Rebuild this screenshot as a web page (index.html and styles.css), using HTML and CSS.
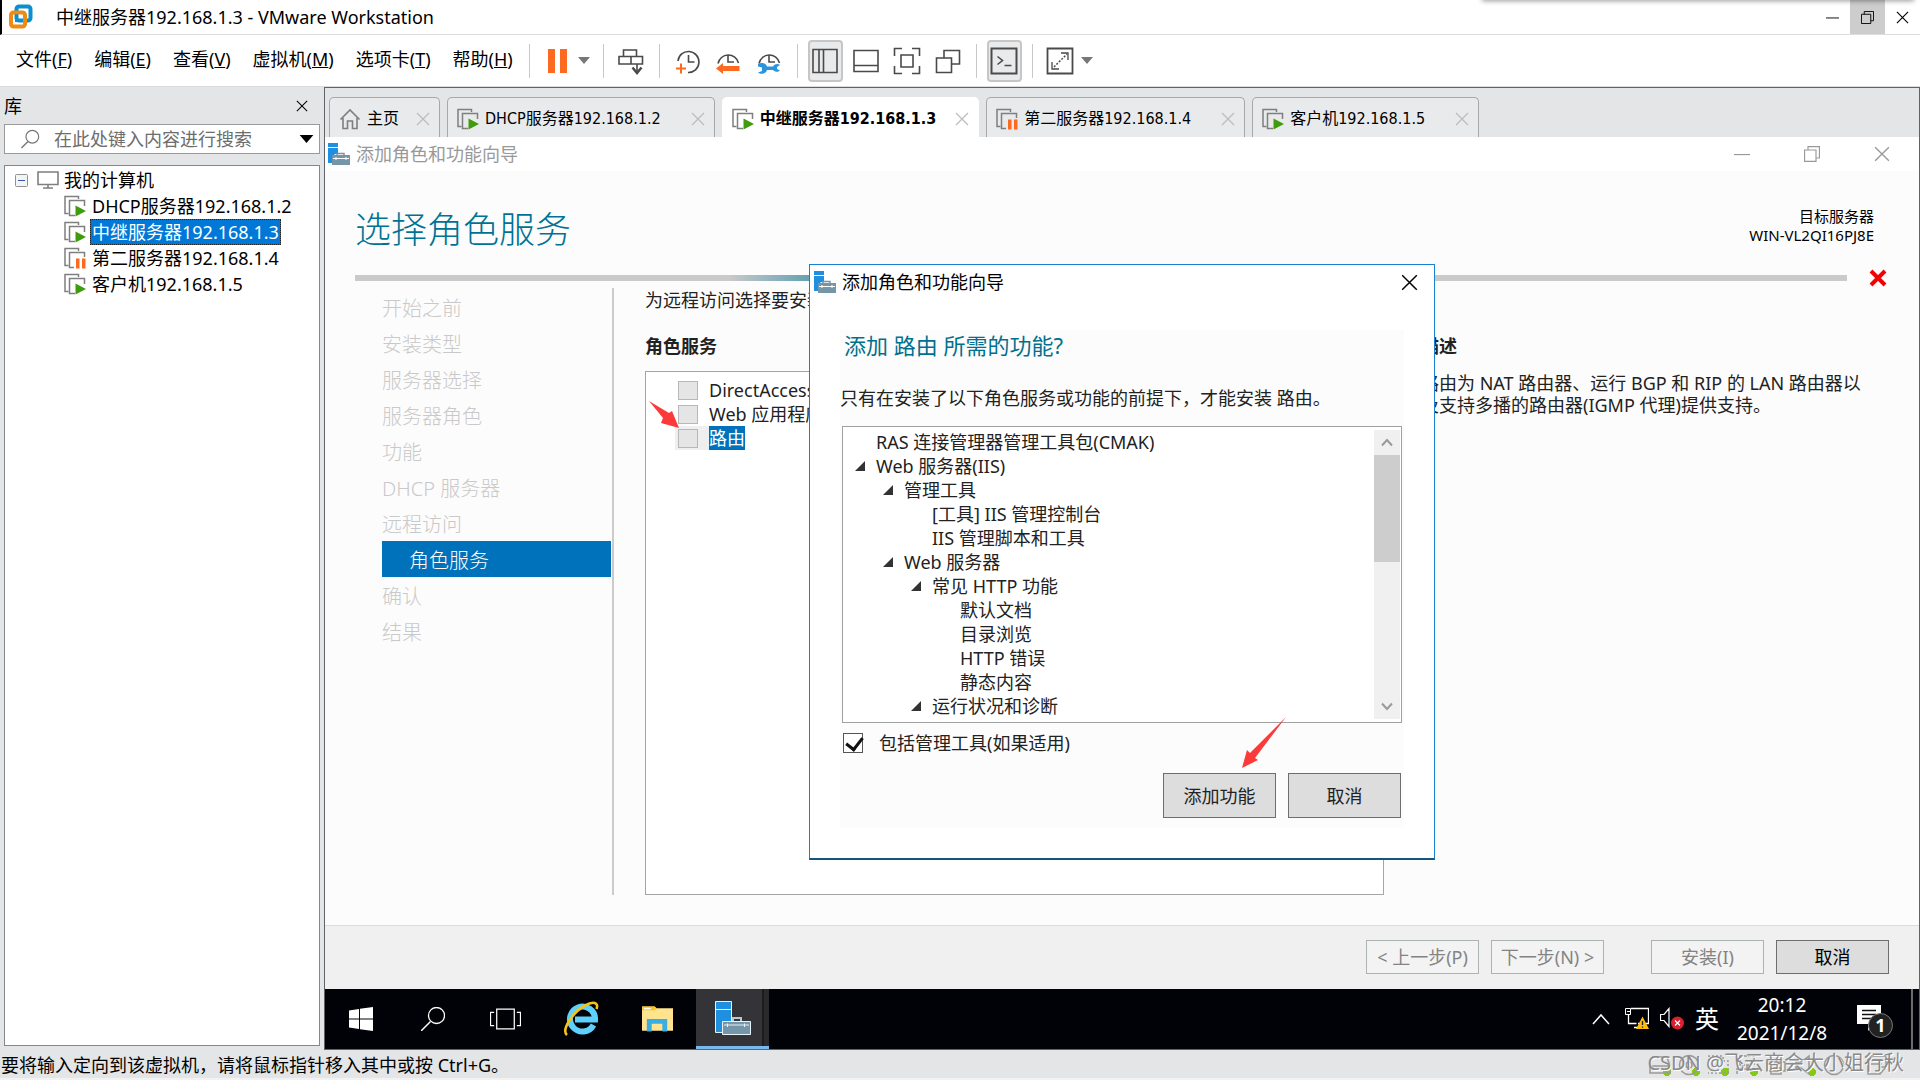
FILE: index.html
```html
<!DOCTYPE html>
<html lang="zh-CN">
<head>
    <meta charset="UTF-8">
    <meta name="viewport" content="width=device-width, initial-scale=1.0">
    <title>中继服务器192.168.1.3 - VMware Workstation</title>
    <link rel="stylesheet" href="styles.css">
</head>
<body>
    <!-- Shared icons -->
    <svg class="sprite">
        <symbol id="vm-on" viewBox="0 0 22 22">
            <path d="M4.500 18.500H1V1.500H14.500V4" fill="none" stroke="#7f7f7f" stroke-width="1.500"/>
            <path d="M11 20.500H5.500V5.500H20.500V11" fill="none" stroke="#7f7f7f" stroke-width="1.500"/>
            <path d="M11.500 10.500L22 16L11.500 21.500Z" fill="#3f9c0c"/>
        </symbol>
        <symbol id="vm-paused" viewBox="0 0 22 22">
            <path d="M4.500 18.500H1V1.500H14.500V4" fill="none" stroke="#7f7f7f" stroke-width="1.500"/>
            <path d="M10 20.500H5.500V5.500H20.500V10" fill="none" stroke="#7f7f7f" stroke-width="1.500"/>
            <path d="M12 11.500h3.500v10h-3.500zM18 11.500h3.500v10h-3.500z" fill="#fa6a20"/>
        </symbol>
        <symbol id="close" viewBox="0 0 14 14">
            <path d="M1 1L13 13M13 1L1 13" fill="none" stroke="currentColor" stroke-width="1.200"/>
        </symbol>
        <symbol id="minimize" viewBox="0 0 14 14">
            <path d="M0 7.500H14" stroke="currentColor"/>
        </symbol>
        <symbol id="restore" viewBox="0 0 14 14">
            <path d="M.500 3.500h10v10h-10zM3.500 3.500v-3h10v10h-3" fill="none" stroke="currentColor"/>
        </symbol>
        <symbol id="server" viewBox="0 0 22 22">
            <path d="M0 0h10v4H0zM0 5h10v6H7l-3 3v6H0z" fill="#1f8fe0"/>
            <path d="M9 12v-1.500h7V12" fill="none" stroke="#7595a8" stroke-width="1.500"/>
            <path d="M4 12h18v10H4z" fill="#7595a8"/>
            <path d="M5 15.500h16M8 14v3M18 14v3" stroke="#fff"/>
        </symbol>
        <symbol id="caret" viewBox="0 0 12 7">
            <path d="M0 0h12L6 7z" fill="currentColor"/>
        </symbol>
        <symbol id="clock" viewBox="0 0 28 28">
            <path d="M4 16.500A10.500 10.500 0 0 1 24.500 16" fill="none" stroke="#4a4a4a" stroke-width="1.600"/>
            <path d="M14 8v7h6" fill="none" stroke="#4a4a4a" stroke-width="1.600"/>
        </symbol>
    </svg>

    <header class="titlebar">
        <svg class="app-logo" viewBox="0 0 26 26">
            <rect x="8.500" y="2.500" width="14" height="14" rx="2.500" fill="none" stroke="#0a8fd0" stroke-width="4"/>
            <rect x="3" y="8.500" width="14" height="14" rx="2.500" fill="none" stroke="#f08a10" stroke-width="4"/>
            <path d="M8.500 10.500v6h5" fill="none" stroke="#0a8fd0" stroke-width="3"/>
        </svg>
        <h1>中继服务器192.168.1.3 - VMware Workstation</h1>
        <div class="window-controls">
            <button aria-label="最小化"><svg><use href="#minimize"/></svg></button>
            <button class="hovered" aria-label="还原"><svg><use href="#restore"/></svg></button>
            <button aria-label="关闭"><svg><use href="#close"/></svg></button>
        </div>
    </header>

    <nav class="menubar">
        <div class="menus">
            <button>文件(<u>F</u>)</button>
            <button>编辑(<u>E</u>)</button>
            <button>查看(<u>V</u>)</button>
            <button>虚拟机(<u>M</u>)</button>
            <button>选项卡(<u>T</u>)</button>
            <button>帮助(<u>H</u>)</button>
        </div>
        <div class="tool-group">
            <button aria-label="挂起"><svg viewBox="0 0 28 28"><path d="M5 2h7v24H5zM17 2h7v24h-7z" fill="#fd6a1f"/></svg></button>
            <button class="drop" aria-label="电源选项"><svg><use href="#caret"/></svg></button>
        </div>
        <div class="tool-group">
            <button aria-label="发送 Ctrl+Alt+Del"><svg viewBox="0 0 28 28"><path d="M6.500 9V3h13v6M2 9.500h23.500V17H2zM14 9.500V17M20 17v8" fill="none" stroke="#4a4a4a" stroke-width="1.600"/><path d="M15.500 20.500L20 26l4.500-5.500" fill="none" stroke="#4a4a4a" stroke-width="2.500"/></svg></button>
        </div>
        <div class="tool-group clocks">
            <button aria-label="拍摄快照"><svg viewBox="0 0 28 28"><path d="M5 14A10.500 10.500 0 1 1 15 25.500M15.500 8v7h6" fill="none" stroke="#4a4a4a" stroke-width="1.600"/><path d="M8 16.500v10M3 21.500h10" stroke="#fd6a1f" stroke-width="2"/></svg></button>
            <button aria-label="恢复快照"><svg viewBox="0 0 28 28"><use href="#clock"/><path d="M2 21.500l7-5.500v3h16.500v5H9v3z" fill="#fd6a1f"/></svg></button>
            <button aria-label="管理快照"><svg viewBox="0 0 28 28"><use href="#clock"/><path d="M3 17c4-2 8-1 9 2.500h6c2-3 5-3 7-1.500l-3 2v2l3 1.500c-2 2-5 1.500-7-.500h-6c-1 4-6 5-9 2.500l4-1.500v-3.500l-4-1z" fill="#2a95dc"/></svg></button>
        </div>
        <div class="tool-group views">
            <button class="pressed" aria-label="显示或隐藏库"><svg viewBox="0 0 28 28"><path d="M2 2.500h24v23H2zM8 2.500v23M12.500 2.500v23" fill="none" stroke="#4a4a4a" stroke-width="1.600"/></svg></button>
            <button aria-label="缩略图栏"><svg viewBox="0 0 28 28"><path d="M2 3.500h24v21H2zM2 18.500h24" fill="none" stroke="#4a4a4a" stroke-width="1.600"/></svg></button>
            <button aria-label="全屏"><svg viewBox="0 0 28 28"><path d="M1.500 9V1.500H9M19 1.500h7.500V9M1.500 19v7.500H9M19 26.500h7.500V19M8 8h12v12H8z" fill="none" stroke="#4a4a4a" stroke-width="1.600"/></svg></button>
            <button aria-label="Unity"><svg viewBox="0 0 28 28"><path d="M2.500 11h15v14.500h-15zM10 11V3.500h15.500V17h-8" fill="none" stroke="#4a4a4a" stroke-width="1.600"/></svg></button>
        </div>
        <div class="tool-group">
            <button class="pressed" aria-label="控制台视图"><svg viewBox="0 0 28 28"><path d="M1.500 1.500h25v25h-25z" fill="none" stroke="#4a4a4a" stroke-width="2"/><path d="M7.500 9.500l5 4-5 4M14.500 18.500h7" fill="none" stroke="#4a4a4a" stroke-width="1.600"/></svg></button>
        </div>
        <div class="tool-group">
            <button aria-label="拉伸客户机"><svg viewBox="0 0 28 28"><path d="M1.500 1.500h25v25h-25z" fill="none" stroke="#4a4a4a" stroke-width="1.800"/><path d="M15 6h7v7M6 15v7h7" fill="none" stroke="#4a4a4a" stroke-width="1.300"/><path d="M8 20L21 7" stroke="#4a4a4a" stroke-width="1.500" stroke-dasharray="2 1.500"/></svg></button>
            <button class="drop" aria-label="拉伸选项"><svg><use href="#caret"/></svg></button>
        </div>
    </nav>

    <main class="workspace">
        <aside class="library">
            <div class="library-head">
                <h2>库</h2>
                <button aria-label="关闭库"><svg><use href="#close"/></svg></button>
            </div>
            <label class="search">
                <svg class="search-icon" viewBox="0 0 22 22"><circle cx="13" cy="8.500" r="7" fill="none" stroke="#777" stroke-width="1.300"/><path d="M8 14L1 21" stroke="#777" stroke-width="1.500"/></svg>
                <input type="text" placeholder="在此处键入内容进行搜索">
                <svg class="search-caret"><use href="#caret"/></svg>
            </label>
            <div class="library-tree">
                <div class="tree-root">
                    <svg class="expander" viewBox="0 0 13 13"><rect x=".500" y=".500" width="12" height="12" rx="1" fill="#f4f4f4" stroke="#919191"/><path d="M3 6.500h7" stroke="#3858a8"/></svg>
                    <svg class="computer" viewBox="0 0 22 18"><path d="M1 1h20v12.500H1zM11 13.500V17M6 17h10" fill="none" stroke="#7f7f7f" stroke-width="1.600"/></svg>
                    <span>我的计算机</span>
                </div>
                <ul>
                    <li><svg><use href="#vm-on"/></svg><span>DHCP服务器192.168.1.2</span></li>
                    <li><svg><use href="#vm-on"/></svg><span class="selected">中继服务器192.168.1.3</span></li>
                    <li><svg><use href="#vm-paused"/></svg><span>第二服务器192.168.1.4</span></li>
                    <li><svg><use href="#vm-on"/></svg><span>客户机192.168.1.5</span></li>
                </ul>
            </div>
        </aside>

        <section class="console">
            <div class="tabs">
                <div class="tab tab-home">
                    <svg viewBox="0 0 22 22"><path d="M1.500 11.500L11 2l9.500 9.500M4 10v10.500h4.500V13h5v7.500H18V10" fill="none" stroke="#7f7f7f" stroke-width="1.600"/></svg>
                    <span>主页</span>
                    <button aria-label="关闭"><svg><use href="#close"/></svg></button>
                </div>
                <div class="tab">
                    <svg><use href="#vm-on"/></svg>
                    <span>DHCP服务器192.168.1.2</span>
                    <button aria-label="关闭"><svg><use href="#close"/></svg></button>
                </div>
                <div class="tab active">
                    <svg><use href="#vm-on"/></svg>
                    <span>中继服务器192.168.1.3</span>
                    <button aria-label="关闭"><svg><use href="#close"/></svg></button>
                </div>
                <div class="tab">
                    <svg><use href="#vm-paused"/></svg>
                    <span>第二服务器192.168.1.4</span>
                    <button aria-label="关闭"><svg><use href="#close"/></svg></button>
                </div>
                <div class="tab">
                    <svg><use href="#vm-on"/></svg>
                    <span>客户机192.168.1.5</span>
                    <button aria-label="关闭"><svg><use href="#close"/></svg></button>
                </div>
            </div>

            <div class="wizard-title">
                <svg class="server-icon"><use href="#server"/></svg>
                <span>添加角色和功能向导</span>
                <div class="wizard-controls">
                    <button aria-label="最小化"><svg><use href="#minimize"/></svg></button>
                    <button aria-label="还原"><svg><use href="#restore"/></svg></button>
                    <button aria-label="关闭"><svg><use href="#close"/></svg></button>
                </div>
            </div>

            <div class="wizard">
                <div class="wizard-head">
                    <h2>选择角色服务</h2>
                    <p class="target">目标服务器<br>WIN-VL2QI16PJ8E</p>
                </div>
                <div class="progress">
                    <div class="bar"></div>
                    <svg viewBox="0 0 18 18"><path d="M2 2L16 16M16 2L2 16" stroke="#f50000" stroke-width="4"/></svg>
                </div>
                <div class="wizard-body">
                    <ol class="steps">
                        <li>开始之前</li>
                        <li>安装类型</li>
                        <li>服务器选择</li>
                        <li>服务器角色</li>
                        <li>功能</li>
                        <li>DHCP 服务器</li>
                        <li>远程访问</li>
                        <li class="current">角色服务</li>
                        <li>确认</li>
                        <li>结果</li>
                    </ol>
                    <div class="roles">
                        <p>为远程访问选择要安装</p>
                        <h3>角色服务</h3>
                        <div class="role-list">
                            <label><input type="checkbox"><span>DirectAccess</span></label>
                            <label><input type="checkbox"><span>Web 应用程序</span></label>
                            <label class="selected"><input type="checkbox"><span>路由</span></label>
                        </div>
                    </div>
                    <div class="description">
                        <h3>描述</h3>
                        <p>路由为 NAT 路由器、运行 BGP 和 RIP 的 LAN 路由器以<br>及支持多播的路由器(IGMP 代理)提供支持。</p>
                    </div>
                </div>

                <div class="dialog" role="dialog" aria-labelledby="dialog-title">
                    <div class="dialog-title">
                        <svg class="server-icon"><use href="#server"/></svg>
                        <span id="dialog-title">添加角色和功能向导</span>
                        <button aria-label="关闭"><svg><use href="#close"/></svg></button>
                    </div>
                    <div class="dialog-body">
                        <h3>添加 路由 所需的功能?</h3>
                        <p>只有在安装了以下角色服务或功能的前提下，才能安装 路由。</p>
                        <div class="feature-box">
                            <ul class="features">
                                <li>RAS 连接管理器管理工具包(CMAK)</li>
                                <li class="open">Web 服务器(IIS)
                                    <ul>
                                        <li class="open">管理工具
                                            <ul>
                                                <li>[工具] IIS 管理控制台</li>
                                                <li>IIS 管理脚本和工具</li>
                                            </ul>
                                        </li>
                                        <li class="open">Web 服务器
                                            <ul>
                                                <li class="open">常见 HTTP 功能
                                                    <ul>
                                                        <li>默认文档</li>
                                                        <li>目录浏览</li>
                                                        <li>HTTP 错误</li>
                                                        <li>静态内容</li>
                                                    </ul>
                                                </li>
                                                <li class="open">运行状况和诊断</li>
                                            </ul>
                                        </li>
                                    </ul>
                                </li>
                            </ul>
                            <div class="scrollbar">
                                <svg viewBox="0 0 12 8"><path d="M1 7L6 1.500L11 7" fill="none" stroke="#9a9a9a" stroke-width="2"/></svg>
                                <div class="thumb"></div>
                                <svg viewBox="0 0 12 8"><path d="M1 1L6 6.500L11 1" fill="none" stroke="#9a9a9a" stroke-width="2"/></svg>
                            </div>
                        </div>
                        <label class="include-tools"><input type="checkbox" checked><span>包括管理工具(如果适用)</span></label>
                        <div class="dialog-buttons">
                            <button>添加功能</button>
                            <button>取消</button>
                        </div>
                    </div>
                </div>

                <!-- Arrow annotations -->
                <svg class="arrow arrow-role" viewBox="0 0 30 27"><path d="M0 0L20 12L23 10L30 27L12 22L14 17Z" fill="#fc3a3a"/></svg>
                <svg class="arrow arrow-add" viewBox="0 0 44 51"><path d="M44 0L13 41L16 43L0 51L5 33L8 36Z" fill="#fc3a3a"/></svg>
            </div>

            <div class="wizard-footer">
                <button disabled>&lt; 上一步(P)</button>
                <button disabled>下一步(N) &gt;</button>
                <button class="install" disabled>安装(I)</button>
                <button>取消</button>
            </div>

            <div class="taskbar">
                <button aria-label="开始"><svg viewBox="0 0 24 24"><path d="M0 3.500L10 2v9.500H0zM11 1.800L24 0v11.500H11zM0 12.500h10V22L0 20.500zM11 12.500h13V24l-13-1.800z" fill="#fff"/></svg></button>
                <button aria-label="搜索"><svg viewBox="0 0 24 24"><circle cx="15.500" cy="8.500" r="8" fill="none" stroke="#fff" stroke-width="1.300"/><path d="M9.500 14.500L0 24" stroke="#fff" stroke-width="1.500"/></svg></button>
                <button class="wide" aria-label="任务视图"><svg viewBox="0 0 30 24"><path d="M6.500 2.500h17v19h-17zM4 5.500H.500v13H4M26 5.500h3.500v13H26" fill="none" stroke="#fff" stroke-width="1.200"/></svg></button>
                <button class="big" aria-label="Internet Explorer"><svg viewBox="0 0 36 36"><path d="M30.500 24A12.500 12.500 0 1 1 32 18.500H12" fill="none" stroke="#5fd0fb" stroke-width="6"/><path d="M4 34C-2 29 10 11 22 4.500C30 0 36 1 33.500 8" fill="none" stroke="#f7c318" stroke-width="2.600"/></svg></button>
                <button class="wide" aria-label="文件资源管理器"><svg viewBox="0 0 32 26"><path d="M0 0h13l2 2h17v23H0z" fill="#ffe38e"/><path d="M0 0h13l2 2-2 2H0z" fill="#fcc51f"/><path d="M2 1.500h7v1.500H2z" fill="#fff"/><path d="M5 13h21v13h-5v-8H10v8H5z" fill="#38aee2"/></svg></button>
                <button class="big running" aria-label="服务器管理器"><svg viewBox="0 0 36 36"><path d="M.500 1.500h16v31H.500zM.500 9.500h16" fill="#1f8fe0" stroke="#e8f2fa"/><path d="M18 21v-3h8v3" fill="none" stroke="#b8c8d2" stroke-width="2"/><path d="M7.500 21.500h28v13h-28z" fill="#7595a8" stroke="#e8f2fa"/><path d="M9 25h25M12.500 23.500v3.500M29.500 23.500v3.500" stroke="#e8f2fa"/></svg></button>
                <div class="tray">
                    <svg class="tray-up" viewBox="0 0 18 12"><path d="M1 11L9 2L17 11" fill="none" stroke="#fff" stroke-width="1.500"/></svg>
                    <svg class="tray-icon" viewBox="0 0 24 24"><path d="M6 1.500h17.500v15H13M3.500 8v8.500h8M9 20.500h5" fill="none" stroke="#fff" stroke-width="1.300"/><path d="M.500 1.500h5v6h-5zM2 4.500h3" fill="none" stroke="#fff"/><path d="M17.500 9.500L24 22H11z" fill="#fdbb0c"/><path d="M17.500 14v4M17.500 19.500v1.200" stroke="#222" stroke-width="1.300"/></svg>
                    <svg class="tray-icon" viewBox="0 0 24 24"><path d="M.500 7.500H4L9 1.500v18L4 13.500H.500z" fill="none" stroke="#fff" stroke-width="1.200"/><circle cx="17.500" cy="16" r="6.500" fill="#dc1f2e"/><path d="M15 13.500l5 5M20 13.500l-5 5" stroke="#fff" stroke-width="1.300"/></svg>
                    <span class="ime">英</span>
                    <div class="clock">20:12<br>2021/12/8</div>
                    <div class="notice">
                        <svg viewBox="0 0 24 28"><path d="M0 0h24v19H16l-5 7V19H0z" fill="#fff"/><path d="M5 5.500h14M5 9.500h14M5 13.500h9" stroke="#111" stroke-width="1.300"/></svg>
                        <span class="count">1</span>
                    </div>
                    <div class="show-desktop"></div>
                </div>
            </div>
        </section>
    </main>

    <footer class="statusbar">
        <p>要将输入定向到该虚拟机，请将鼠标指针移入其中或按 Ctrl+G。</p>
        <div class="devices">
            <svg class="on" viewBox="0 0 22 22"><path d="M4 3h14l3 9v7H1v-7zM1 12h20"/></svg>
            <svg class="on" viewBox="0 0 22 22"><circle cx="11" cy="11" r="9.500"/><circle cx="11" cy="11" r="3"/></svg>
            <svg class="on" viewBox="0 0 22 22"><path d="M2 7V2h14v5h5v12H1" stroke-dasharray="2 2"/></svg>
            <svg class="on" viewBox="0 0 22 22"><path d="M4 2h14v9H4zM11 11v3M1 20v-5h18" stroke-dasharray="3 1"/></svg>
            <svg viewBox="0 0 22 22"><path d="M6 8V2h10v6M2 8h18v9H2zM6 14h10v6H6z"/></svg>
            <svg class="on" viewBox="0 0 22 22"><path d="M2 8h5l8-6v18l-8-6H2z"/></svg>
            <svg viewBox="0 0 22 22"><circle cx="11" cy="11" r="9.500"/></svg>
            <svg class="messages" viewBox="0 0 22 22"><path d="M2 2h18v11l-6 7H2zM20 13h-6v7M5 6h11M5 10h11"/></svg>
        </div>
        <span class="watermark">CSDN @飞云商会大小姐行秋</span>
    </footer>
</body>
</html>
```

FILE: styles.css
```css
* {
    margin: 0;
    padding: 0;
    box-sizing: border-box;
}

body {
    height: 100vh;
    display: flex;
    flex-direction: column;
    overflow: hidden;
    background: #e4e5e7;
    color: #000;
    font-family: "Noto Sans", "Noto Sans CJK SC", sans-serif;
    font-size: 18px;
    line-height: 24px;
}

button, input {
    font: inherit;
    color: inherit;
}

button {
    border: none;
    background: none;
    display: flex;
    align-items: center;
    justify-content: center;
}

ul, ol {
    list-style: none;
}

svg {
    display: block;
    flex: none;
}

.sprite {
    display: none;
}

/* Host window */
.titlebar {
    position: relative;
    height: 35px;
    display: flex;
    align-items: center;
    padding-left: 6px;
    background: #fff;
    border-left: 2px solid #000;
    border-bottom: 1px solid #dedede;
}

.titlebar::after {
    content: '';
    position: absolute;
    top: -6px;
    right: 6px;
    width: 432px;
    height: 6px;
    box-shadow: 0 1px 5px rgba(0, 0, 0, 0.4);
}

.app-logo {
    width: 26px;
    height: 26px;
}

.titlebar h1 {
    margin-left: 22px;
    font-size: 18px;
    font-weight: 400;
}

.window-controls {
    margin-left: auto;
    display: flex;
    height: 100%;
}

.window-controls button {
    width: 35px;
}

.window-controls .hovered {
    background: #cdcdcd;
}

.window-controls svg {
    width: 13px;
    height: 13px;
}

.menubar {
    height: 52px;
    display: flex;
    align-items: center;
    background: #fff;
    border-bottom: 1px solid #dcdcdc;
}

.menus {
    display: flex;
    gap: 22px;
    padding: 0 16px 3px;
}

.tool-group {
    height: 34px;
    display: flex;
    align-items: center;
    padding: 0 10px;
    border-left: 1px solid #c8c8c8;
}

.tool-group button {
    width: 35px;
    height: 42px;
}

.tool-group svg {
    width: 28px;
    height: 28px;
}

.tool-group .pressed {
    background: #e9eaec;
    border: 2px solid #c6c6c6;
    border-radius: 4px;
}

.tool-group .drop {
    width: 18px;
    color: #777;
}

.tool-group .drop svg {
    width: 12px;
    height: 7px;
}

.clocks, .views {
    gap: 6px;
}

.workspace {
    flex: 1;
    min-height: 0;
    display: flex;
}

/* Library panel */
.library {
    width: 324px;
    display: flex;
    flex-direction: column;
    padding: 0 4px 4px;
    background: #e4e5e7;
}

.library-head {
    height: 37px;
    display: flex;
    align-items: center;
    justify-content: space-between;
    padding-right: 12px;
}

.library-head h2 {
    font-size: 18px;
    font-weight: 400;
}

.library-head svg {
    width: 12px;
    height: 12px;
}

.search {
    height: 30px;
    display: flex;
    align-items: center;
    margin-bottom: 11px;
    padding: 0 5px 0 15px;
    background: #fff;
    border: 1px solid #9a9a9a;
}

.search-icon {
    width: 21px;
    height: 20px;
}

.search input {
    flex: 1;
    min-width: 0;
    margin-left: 13px;
    border: none;
    outline: none;
    background: none;
}

.search input::placeholder {
    color: #6d6d6d;
}

.search-caret {
    width: 15px;
    height: 8px;
}

.library-tree {
    flex: 1;
    padding: 1px 0 0 10px;
    background: #fff;
    border: 1px solid #828790;
}

.tree-root, .library-tree li {
    height: 26px;
    display: flex;
    align-items: center;
}

.expander {
    width: 13px;
    height: 13px;
}

.computer {
    width: 22px;
    height: 18px;
    margin: 0 5px 0 9px;
}

.library-tree ul {
    padding-left: 49px;
}

.library-tree li svg {
    width: 22px;
    height: 22px;
    margin-right: 4px;
}

.library-tree li span {
    height: 26px;
    padding: 0 1px;
    border: 1px dotted transparent;
}

.library-tree .selected {
    background: #0078d7;
    border-color: #222;
    color: #fff;
}

/* Console with tabs */
.console {
    flex: 1;
    min-width: 0;
    display: flex;
    flex-direction: column;
    border: 1px solid #606468;
}

.console > * {
    flex: none;
}

.tabs {
    height: 49px;
    display: flex;
    gap: 7px;
    padding: 9px 4px 0;
}

.tab {
    display: flex;
    align-items: center;
    gap: 6px;
    padding: 2px 9px 0;
    background: #e9eaec;
    border: 1px solid #a6a8aa;
    border-bottom: none;
    border-radius: 5px 5px 0 0;
    font-family: "DejaVu Sans Condensed", "Noto Sans CJK SC", sans-serif;
    font-size: 16px;
}

.tab > svg {
    width: 22px;
    height: 22px;
}

.tab button {
    margin-left: 24px;
    color: #bcbcbc;
}

.tab button svg {
    width: 14px;
    height: 14px;
}

.tab-home button {
    margin-left: 11px;
}

.tab.active {
    background: #fff;
    border-color: #fff;
    font-weight: 700;
}

.tab.active button {
    margin-left: 13px;
}

/* Wizard window */
.wizard-title {
    height: 34px;
    display: flex;
    align-items: center;
    padding: 0 2px 0 3px;
    background: #fff;
    color: #999;
}

.server-icon {
    width: 22px;
    height: 22px;
    margin-right: 6px;
}

.wizard-controls {
    margin-left: auto;
    display: flex;
}

.wizard-controls button {
    width: 70px;
}

.wizard-controls svg {
    width: 16px;
    height: 16px;
}

.console > .wizard {
    flex: 1;
    min-height: 0;
}

.wizard {
    position: relative;
    display: flex;
    flex-direction: column;
    padding: 0 32px 0 30px;
    background: #fcfcfc;
    color: #222;
}

.wizard-head {
    height: 97px;
    display: flex;
    justify-content: space-between;
    padding: 34px 13px 0 0;
}

.wizard-head h2 {
    color: #007395;
    font-size: 36px;
    font-weight: 300;
    line-height: 50px;
}

.target {
    padding-top: 2px;
    color: #000;
    font-size: 15px;
    line-height: 19px;
    text-align: right;
}

.progress {
    height: 20px;
    display: flex;
    align-items: center;
    gap: 22px;
}

.bar {
    flex: 1;
    height: 6px;
    background: linear-gradient(90deg, #cacaca 25%, #0f7f9f 35%, #cacaca 50%);
}

.progress svg {
    width: 18px;
    height: 18px;
}

.wizard-body {
    flex: 1;
    display: flex;
    padding-bottom: 30px;
}

.steps {
    width: 259px;
    padding: 1px 1px 0 27px;
    border-right: 2px solid #cbcbcb;
    color: #c9c9c9;
    font-size: 20px;
    font-weight: 300;
    line-height: 40px;
}

.steps li {
    height: 36px;
}

.steps .current {
    padding-left: 27px;
    background: #0072bc;
    color: #fff;
}

.roles {
    width: 739px;
    display: flex;
    flex-direction: column;
    margin: 0 37px 0 31px;
}

.roles h3, .description h3 {
    font-size: 18px;
    font-weight: 700;
}

.roles h3 {
    margin: 22px 0 13px;
}

.role-list {
    flex: 1;
    padding: 6px 0 0 29px;
    background: #fff;
    border: 1px solid #a5a5a5;
}

.role-list label {
    height: 24px;
    display: flex;
    align-items: center;
}

.role-list input {
    appearance: none;
    width: 20px;
    height: 19px;
    margin: 0 11px 0 3px;
    background: #e5e5e5;
    border: 1px solid #b8b8b8;
}

.role-list .selected {
    width: 70px;
    background: #efefef;
}

.role-list .selected span {
    background: #0072bc;
    color: #fff;
}

.description h3 {
    margin: 46px 0 14px;
}

.description p {
    line-height: 22px;
    white-space: nowrap;
}

/* Confirmation dialog */
.dialog {
    position: absolute;
    top: 93px;
    left: 484px;
    width: 626px;
    background: #fff;
    border: 1px solid #1a80d0;
    border-bottom: 2px solid #14547f;
}

.dialog-title {
    height: 34px;
    display: flex;
    align-items: center;
    padding: 0 16px 0 4px;
    color: #000;
}

.dialog-title button {
    margin-left: auto;
}

.dialog-title button svg {
    width: 17px;
    height: 17px;
}

.dialog-body {
    margin: 31px 30px 30px;
    padding: 0 2px 10px;
    background: #fcfcfc;
}

.dialog-body h3 {
    padding-left: 2px;
    color: #00708f;
    font-size: 22px;
    font-weight: 400;
    line-height: 30px;
}

.dialog-body p {
    margin: 26px 0 16px -2px;
    white-space: nowrap;
}

.feature-box {
    height: 297px;
    display: flex;
    justify-content: space-between;
    padding: 3px 1px 3px 0;
    background: #fff;
    border: 1px solid #a0a0a0;
}

.features {
    overflow: hidden;
    padding-left: 33px;
}

.features ul {
    padding-left: 28px;
}

.features li {
    position: relative;
}

.features .open::before {
    content: '';
    position: absolute;
    top: 7px;
    left: -21px;
    width: 10px;
    height: 10px;
    background: #333;
    clip-path: polygon(100% 0, 100% 100%, 0 100%);
}

.scrollbar {
    width: 26px;
    display: flex;
    flex-direction: column;
    align-items: center;
    background: #f0f0f0;
}

.scrollbar svg {
    width: 12px;
    height: 25px;
}

.scrollbar .thumb {
    width: 100%;
    height: 107px;
    margin-bottom: auto;
    background: #cdcdcd;
}

.include-tools {
    display: flex;
    align-items: center;
    margin: 8px 0 18px;
}

.include-tools input {
    appearance: none;
    width: 20px;
    height: 20px;
    margin: 0 16px 0 1px;
    background: #fff;
    border: 1px solid #555;
}

.include-tools input:checked::before {
    content: '';
    display: block;
    width: 8px;
    height: 13px;
    margin: 0 0 0 5px;
    border: solid #111;
    border-width: 0 3px 3px 0;
    transform: rotate(38deg);
}

.dialog-buttons {
    display: flex;
    justify-content: flex-end;
    gap: 12px;
    padding-right: 1px;
}

.dialog-buttons button {
    width: 113px;
    height: 45px;
    background: #dddddd;
    border: 1px solid #6e6e6e;
}

.arrow {
    position: absolute;
}

.arrow-role {
    top: 230px;
    left: 324px;
    width: 30px;
    height: 27px;
}

.arrow-add {
    top: 546px;
    left: 917px;
    width: 44px;
    height: 51px;
}

.wizard-footer {
    height: 64px;
    display: flex;
    align-items: center;
    justify-content: flex-end;
    gap: 12px;
    padding: 0 30px 1px 0;
    background: #f0f0f0;
    border-top: 1px solid #dcdcdc;
}

.wizard-footer button {
    width: 113px;
    height: 34px;
    background: #dddddd;
    border: 1px solid #6e6e6e;
}

.wizard-footer button:disabled {
    background: #f3f3f3;
    border-color: #adb2b5;
    color: #838383;
}

.wizard-footer .install {
    margin-left: 35px;
}

/* Guest taskbar */
.taskbar {
    height: 60px;
    display: flex;
    background: #000207;
}

.taskbar button {
    width: 72px;
}

.taskbar button svg {
    width: 24px;
    height: 24px;
}

.taskbar .wide svg {
    width: 31px;
    height: 26px;
}

.taskbar .big {
    width: 80px;
}

.taskbar .big svg {
    width: 36px;
    height: 36px;
}

.taskbar .running {
    width: 73px;
    margin-left: 3px;
    background: linear-gradient(90deg, #343438 66px, #1c1c1e 66px, #1c1c1e 68px, #2a2a2d 68px);
    border-bottom: 3px solid #76b9ed;
}

.tray {
    margin-left: auto;
    display: flex;
    align-items: center;
    color: #fff;
}

.tray-up {
    width: 18px;
    height: 12px;
    margin-right: 15px;
}

.tray-icon {
    width: 24px;
    height: 24px;
    margin-right: 11px;
}

.ime {
    width: 24px;
    font-size: 24px;
}

.clock {
    width: 126px;
    font-size: 19px;
    line-height: 28px;
    text-align: center;
}

.notice {
    position: relative;
    width: 66px;
    padding-left: 12px;
}

.notice svg {
    width: 24px;
    height: 28px;
}

.count {
    position: absolute;
    top: 8px;
    left: 23px;
    width: 25px;
    height: 25px;
    background: #222;
    border: 1px solid #777;
    border-radius: 50%;
    font-size: 18px;
    font-weight: 700;
    line-height: 22px;
    text-align: center;
}

.show-desktop {
    width: 8px;
    height: 60px;
    border-left: 2px solid #6c6c6c;
}

/* Host status bar */
.statusbar {
    position: relative;
    height: 30px;
    display: flex;
    align-items: center;
    justify-content: space-between;
    padding: 2px 32px 0 1px;
    border-bottom: 2px solid #f2f2f2;
}

.devices {
    display: flex;
    gap: 7px;
}

.devices svg {
    width: 22px;
    height: 22px;
    fill: none;
    stroke: #999;
    stroke-width: 1.5;
}

.devices .on {
    background: radial-gradient(circle at 18px 18px, #84c916 4px, transparent 4px);
}

.devices .messages {
    margin-left: 14px;
}

.watermark {
    position: absolute;
    right: 16px;
    bottom: 3px;
    color: #8a8a8a;
    font-size: 20px;
    text-shadow: 1px 1px 0 #fff;
}
```
